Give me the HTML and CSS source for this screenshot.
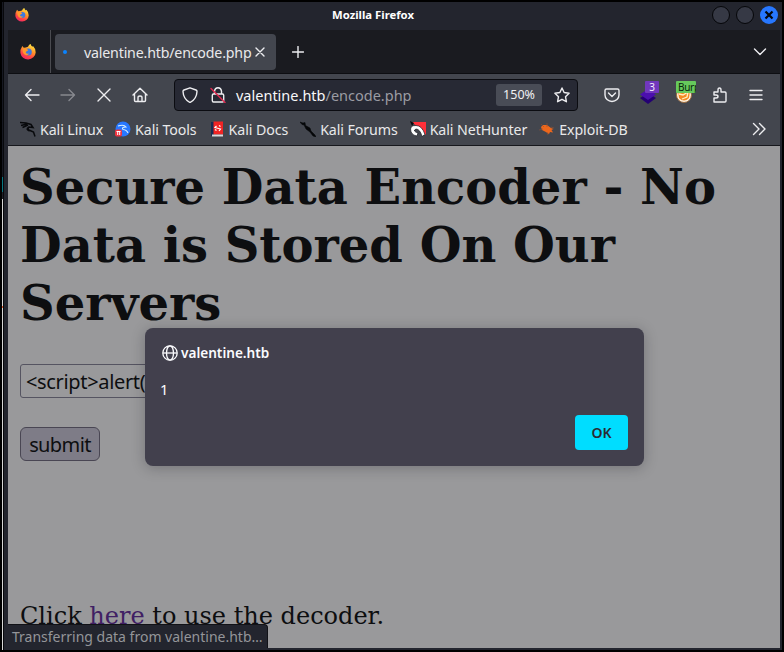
FILE: index.html
```html
<!DOCTYPE html>
<html lang="en">
<head>
<meta charset="utf-8">
<title>Mozilla Firefox</title>
<link rel="stylesheet" href="styles.css">
</head>
<body>
<svg class="defs" width="0" height="0" aria-hidden="true">
  <defs>
    <linearGradient id="fire" x1=".8" y1="0" x2=".3" y2="1"><stop offset="0" stop-color="#fff14a"/><stop offset=".4" stop-color="#ff9a28"/><stop offset=".75" stop-color="#ff4245"/><stop offset="1" stop-color="#ef2767"/></linearGradient>
    <symbol id="fox" viewBox="0 0 16 16">
      <path fill="url(#fire)" d="M2.3 2 3.8 3.8 5.8 3.5 8 2.8Q9 .3 10.7 0q.1 1.6 1.7 2.8l.6-.9Q15.800 4.500 15.700 8.500A7.700 7.500 0 0 1 .4 9Q0 5.500 2.300 2z"/>
      <circle class="globe" cx="8.300" cy="8" r="3.500"/>
      <path fill="#ff982e" d="M2.500 4.500 6 4l2.300 2.200-2 1.200-.6 1.200q1 1.800 3.500 1-1.200 2.200-3.700 1.500Q2.500 10 2.500 4.500z"/>
    </symbol>
  </defs>
</svg>
<div class="desktop">
  <div class="behind"></div>
  <div class="window">
    <header class="titlebar">
      <svg class="app-icon" viewBox="0 0 16 16"><use href="#fox"/></svg>
      <span class="window-title">Mozilla Firefox</span>
      <div class="controls">
        <i class="control"></i><i class="control"></i>
        <i class="control close"><svg viewBox="0 0 18 18"><path d="m5.500 5.500 7 7m0-7-7 7"/></svg></i>
      </div>
    </header>
    <div class="tabs">
      <div class="pinned"><svg viewBox="0 0 16 16"><use href="#fox"/></svg></div>
      <div class="tab">
        <i class="loading"></i>
        <span>valentine.htb/encode.php</span>
        <svg class="tab-close" viewBox="0 0 10 10"><path d="m1 1 8 8m0-8-8 8"/></svg>
      </div>
      <svg class="new-tab" viewBox="0 0 12 12"><path d="M6 .5v11M.5 6h11"/></svg>
      <svg class="all-tabs" viewBox="0 0 14 8"><path d="m1.500 1 5.500 5.500L12.500 1"/></svg>
    </div>
    <nav class="toolbar">
      <div class="nav-buttons">
        <svg class="ic" viewBox="0 0 16 16"><path d="M15 8H1.500M7 2.500 1.500 8 7 13.500"/></svg>
        <svg class="ic dim" viewBox="0 0 16 16"><path d="M1 8h13.500M9 2.500 14.500 8 9 13.500"/></svg>
        <svg class="ic" viewBox="0 0 16 16"><path d="m2 2 12 12m0-12L2 14"/></svg>
        <svg class="ic" viewBox="0 0 16 16"><path d="M1 8 8 1.200 15 8M2.500 7v6.500q0 1 1 1h9q1 0 1-1V7M6 14.500v-4Q6 9 8 9t2 1.500v4"/></svg>
      </div>
      <div class="urlbar">
        <svg class="ic" viewBox="0 0 16 16"><path d="M8 .8 14 3q1 .4 1 1.500-.3 7.500-7 11-6.700-3.500-7-11Q1 3.400 2 3z"/></svg>
        <svg class="ic lock" viewBox="0 0 16 16"><path d="M4.500 7V4Q5 .8 8 .8T11.500 4v3M3.500 7h9q1.200 0 1.200 1.200v5.300q0 1.500-1.200 1.500h-9q-1.200 0-1.200-1.500V8.200Q2.300 7 3.500 7z"/><path class="strike" d="m1 1.500 14 14"/></svg>
        <span class="url"><b>valentine.htb</b>/encode.php</span>
        <span class="zoom">150%</span>
        <svg class="ic star" viewBox="0 0 16 16"><path d="m8 1 2.100 4.500 5 .7-3.600 3.500.9 5L8 12.300 3.600 14.700l.9-5L.9 6.200l5-.7z"/></svg>
      </div>
      <div class="extensions">
        <svg class="ic" viewBox="0 0 16 16"><path d="M2.500 2h11q1.500 0 1.500 1.500V8a7 6.500 0 0 1-14 0V3.500Q1 2 2.500 2zM4.500 6 8 9.500 11.500 6"/></svg>
        <div class="ext"><svg viewBox="0 0 18 18"><path fill="#240073" d="m9 7 8 5-8 6-8-6z"/><path fill="#4b0fae" d="m9 3 8 5.500L9 14 1 8.500z"/></svg><span class="badge count">3</span></div>
        <div class="ext"><svg viewBox="0 0 18 18"><circle cx="9" cy="9" r="7.500" fill="#fff2df" stroke="#9a6a3d"/><path fill="#f58a22" d="M3 5q6-5 12 0l-1 7q-5 5-10 0z"/><path d="m4 8 4 1 5-3-1 5-5 2" fill="none" stroke="#fff0c5" stroke-width="1.300"/></svg><span class="badge burp">Burp</span></div>
        <svg class="ic" viewBox="0 0 16 16"><path d="M2 5h4V3Q6 1 7.500 1T9 3v2h4q1 0 1 1v8q0 1-1 1H2v-4h2q2 0 2-1.500T4 8H2z"/></svg>
        <svg class="ic" viewBox="0 0 16 16"><path d="M2 3.500h12M2 8h12M2 12.500h12"/></svg>
      </div>
    </nav>
    <div class="bookmarks">
      <a><svg viewBox="0 0 16 16"><path class="dragon" d="M0 1.500 6 2 11 3.500 13 6.500 9 6Q7 8 9.500 9.300L13.500 11l1.500 4.500M1 4.500l6-1.500M2.500 6.500 8 4M9 6Q5 8.500 9.500 10"/></svg>Kali Linux</a>
      <a><svg viewBox="0 0 16 16"><circle cx="8" cy="8" r="7.500" fill="#2878ff"/><path d="M3 5q6-2 8 1-5 0-3 2.500 4 .5 5 3.500" fill="none" stroke="#d9efff" stroke-width="1.100"/><rect y="8.500" width="7" height="7" rx="2" fill="#ef3340"/><path d="M1.500 10.500h4M2.700 10.500v3.500m2-3.500v3.500" stroke="#fff"/></svg>Kali Tools</a>
      <a><svg viewBox="0 0 16 16"><path d="M2 1h3v14H2z" fill="#172b52"/><path d="M4.500.5H14v13H4.500z" fill="#f12424"/><path d="M3 13.500h11v2H3z" fill="#d6d9dd"/><path d="M7.500 5 6 6.500l5.500 1.500L10 10M10 4.500l1.500 1M6 8.500l1.500 1" fill="none" stroke="#fff" stroke-width="1.200"/></svg>Kali Docs</a>
      <a><svg viewBox="0 0 16 16"><path d="m0 1 3 1 2-.5.5 3L10 7l1 3 4 4 1 2-3-1-3-4-4-3-2-4-2-.5z" fill="#050608" stroke="#050608" stroke-width=".5"/></svg>Kali Forums</a>
      <a><svg viewBox="0 0 16 16"><path d="M2 1h14v13z" fill="#ff3039"/><path d="m0 0 4 2-2 3z" fill="#07090c"/><path d="M1 11Q-1 4 6 4.500q6 0 9 9l-3 2Q10 8 6 8q-4 2 2 4l-1 3Q3 15 1 11z" fill="#fff" stroke="#12151c" stroke-width=".7"/></svg>Kali NetHunter</a>
      <a><svg viewBox="0 0 16 16"><path d="m2 6 2-2 4 0 4 3 2.500 1-2 1 1.500 2.500-3-.5-1 2-4-2.500L3 9z" fill="#ed671c"/><path d="m2 3 3 3m3-4v4M0 9l4-1m4 3 1 3m3-8 3 1" stroke="#8e5335" stroke-width=".6"/></svg>Exploit-DB</a>
      <svg class="overflow" viewBox="0 0 14 14"><path d="m1.500 1.500 5.500 5.500-5.500 5.500m6-11L13 7l-5.500 5.500"/></svg>
    </div>
    <main class="page">
      <h1>Secure Data Encoder - No Data is Stored On Our Servers</h1>
      <div class="field">&lt;script&gt;alert(</div>
      <div class="submit">submit</div>
      <p class="decoder">Click <a>here</a> to use the decoder.</p>
      <div class="status">Transferring data from valentine.htb…</div>
      <section class="dialog">
        <div class="origin"><svg viewBox="0 0 16 16"><circle cx="8" cy="8" r="7.200"/><ellipse cx="8" cy="8" rx="3.500" ry="7.200"/><path d="M1 8h14"/></svg>valentine.htb</div>
        <div class="message">1</div>
        <div class="ok">OK</div>
      </section>
    </main>
  </div>
</div>
</body>
</html>
```

FILE: styles.css
```css
* { box-sizing: border-box; }
body { margin: 0; background: #000; font-family: "Noto Sans", sans-serif; overflow: hidden; }
svg { display: block; flex: none; }
.defs { position: absolute; }
.desktop { width: 784px; height: 652px; padding: 2px; display: flex; }
.behind { width: 2px; background: linear-gradient(#161821 0 175px, #087681 175px 190px, #20222a 190px 197px, #d8d8d8 197px 304px, #d4562b 304px 306px, #d8d8d8 306px); border-right: 1px solid #08090c; }
.window { width: 778px; height: 648px; background: #23252e; padding: 0 2px 2px 4px; display: flex; flex-direction: column; }

.titlebar { height: 28px; display: flex; align-items: center; justify-content: space-between; padding: 0 2px 2px 7px; color: #fff; }
.app-icon { width: 14px; height: 14px; }
.window-title { font-size: 11.300px; font-weight: 700; margin: 0 0 2px 5px; }
.controls { display: flex; gap: 6px; }
.control { width: 18px; height: 18px; border-radius: 50%; border: 1px solid #050609; background: #363945; }
.close { border: 0; background: #2777ff; }
.close path { stroke: #05070c; stroke-width: 2.200; }
.globe { fill: #3d79df; }
.pinned .globe { fill: #7542d8; }

.tabs { height: 44px; background: #1a1b20; border-bottom: 1px solid #0d0e12; display: flex; align-items: center; }
.pinned { width: 43px; height: 43px; border-right: 1px solid #4a4b50; display: flex; align-items: center; padding-left: 12px; }
.pinned svg { width: 16px; height: 16px; }
.tab { width: 221px; height: 36px; margin-left: 4px; border-radius: 4px; background: #43464e; color: #e9e9eb; display: flex; align-items: center; padding: 0 11px 0 8px; font-size: 14.200px; letter-spacing: -.18px; white-space: nowrap; }
.loading { width: 4px; height: 4px; border-radius: 50%; background: #0a84ff; }
.tab span { margin-left: 17px; padding-top: 2px; width: 171px; flex: none; }
.tab-close { width: 10px; height: 10px; }
.tabs path, .ic path, .overflow path { fill: none; stroke: #ededf0; stroke-width: 1.400; stroke-linecap: round; stroke-linejoin: round; }
.new-tab { width: 12px; height: 12px; margin-left: 16px; }
.all-tabs { width: 14px; height: 8px; margin: 0 13px 0 auto; }

.toolbar { height: 41px; background: #43464e; display: flex; align-items: center; padding: 0 16px; }
.ic { width: 16px; height: 16px; }
.ic .strike { stroke: #e22850; }
.nav-buttons { display: flex; gap: 20px; width: 150px; }
.dim { opacity: .4; }
.urlbar { width: 404px; height: 32px; border: 1px solid #0b0c11; border-radius: 4px; background: #272934; display: flex; align-items: center; padding: 0 7px; }
.lock { margin-left: 12px; }
.url { margin-left: 10px; font-size: 14.500px; color: #9b9ca3; white-space: nowrap; }
.url b { color: #f7f7f9; font-weight: 400; }
.zoom { width: 46px; height: 22px; margin-left: auto; border-radius: 3px; background: #494c56; color: #f0f0f2; font-size: 12.500px; line-height: 21px; text-align: center; }
.star { margin-left: 12px; }
.extensions { display: flex; align-items: center; gap: 20px; margin-left: 26px; }
.ext { position: relative; width: 16px; height: 18px; }
.ext svg { width: 18px; height: 18px; margin-left: -1px; }
.badge { position: absolute; top: -5px; left: 5px; width: 14px; height: 12px; border-radius: 1px; background: #7137bd; color: #f4efff; font-size: 10px; line-height: 12px; text-align: center; overflow: hidden; }
.burp { left: 0; width: 20px; text-align: left; padding-left: 2px; letter-spacing: -.3px; color: #082409; background: #66c95c; }

.bookmarks { height: 31px; background: #43464e; border-bottom: 1px solid #17181d; display: flex; align-items: center; gap: 12px; padding: 0 14px 2px 12px; color: #e9e9ea; font-size: 14.200px; letter-spacing: -.08px; white-space: nowrap; }
.bookmarks a { display: flex; align-items: center; gap: 4px; }
.bookmarks a svg { width: 16px; height: 16px; }
.dragon { fill: none; stroke: #08090c; stroke-width: 1.500; }
.bookmarks .overflow { width: 14px; height: 14px; margin-left: auto; }

.page { position: relative; height: 502px; background: #99999b; padding: 12px; overflow: hidden; color: #0d0e10; font-family: "DejaVu Serif", serif; }
h1 { margin: 0; font-size: 48px; line-height: 58px; }
.field { width: 300px; height: 34px; margin-top: 32px; border: 1px solid #555461; border-radius: 3px; padding: 0 5px; font: 20px/33px "Noto Sans", sans-serif; letter-spacing: -.34px; }
.submit { width: 80px; height: 34px; margin-top: 29px; border: 1px solid #494653; border-radius: 6px; background: #7e7c87; font: 20px/34px "Noto Sans", sans-serif; letter-spacing: -.6px; text-align: center; }
.decoder { margin: 141px 0 0; font-size: 24px; line-height: 28px; }
.decoder a { color: #402064; }
.status { position: absolute; left: 0; bottom: 0; width: 260px; height: 24px; border-top: 1px solid #111217; border-right: 1px solid #111217; border-radius: 0 4px 0 0; background: #23252e; color: #949599; padding-left: 4px; font: 14px/23px "Noto Sans", sans-serif; white-space: nowrap; }
.dialog { position: absolute; left: 137px; top: 182px; width: 499px; height: 138px; border-radius: 8px; background: #42404d; color: #fbfbfe; padding: 16px; box-shadow: 0 2px 14px rgba(20, 20, 30, .28); display: flex; flex-direction: column; font: 14.600px/18px "Noto Sans", sans-serif; }
.origin { display: flex; align-items: center; gap: 3px; padding-left: 1px; font-size: 13.600px; font-weight: 600; }
.origin svg { width: 16px; height: 16px; fill: none; stroke: #fbfbfe; stroke-width: 1.300; }
.message { margin: 18px 0 0 -1px; }
.ok { width: 53px; height: 35px; margin: auto 0 0 auto; border-radius: 4px; background: #00ddff; color: #2b2a33; font-size: 14px; font-weight: 600; line-height: 35px; text-align: center; }
```
